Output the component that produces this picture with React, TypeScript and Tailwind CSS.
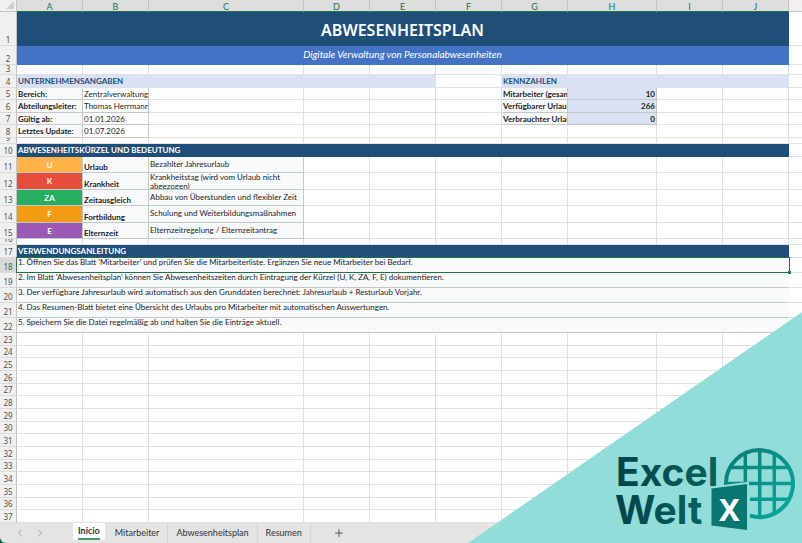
import { ChevronLeft, ChevronRight, Plus } from "lucide-react";

type Cell = {
    text?: string;
    span?: number;
    className?: string;
    selected?: boolean;
};

type Row = {
    height: string;
    cells?: Cell[];
};

const COLUMNS = ["A", "B", "C", "D", "E", "F", "G", "H", "I", "J"];

const GRID = "border-[#dfe2e1]";
const BOX = "border-[#c3c8c8]";
const BANNER = "bg-[#1f4e78] border-[#1f4e78] text-white text-[8px] leading-[12px] font-bold";
const SECTION = "bg-[#d9e1f2] border-[#d9e1f2] text-[#1f4e78] text-[8px] leading-[12px] font-bold";
const LABEL = `bg-[#f8f9fb] ${BOX} text-[8px] leading-[12px] font-bold`;
const VALUE = `${BOX} text-[8px] leading-[12px]`;
const KPI = `bg-[#d9e1f2] ${BOX} text-[8px] leading-[12px] font-bold text-right`;
const CODE = `${BOX} text-[8px] leading-[16px] font-bold text-white text-center`;
const MEANING = `bg-[#f8f9fb] ${BOX} text-[8px] leading-[10px] font-bold flex items-end`;
const DESCRIPTION = `bg-[#f8f9fb] ${BOX} text-[8px]`;
const STEP = "bg-[#f8f9fb] border-r-[#f8f9fb] border-b-[#c3c8c8] text-[8px] leading-[9px]";

const info = (label: string, value: string, kpi?: string, amount?: string): Row => ({
    height: "h-[13px]",
    cells: [
        { text: label, className: LABEL },
        { text: value, className: VALUE },
        {}, {}, {}, {},
        kpi ? { text: kpi, className: LABEL } : {},
        kpi ? { text: amount, className: KPI } : {},
    ],
});

const code = (short: string, color: string, meaning: string, description: string, leading = "leading-[15px]"): Row => ({
    height: "h-[16px]",
    cells: [
        { text: short, className: `${CODE} ${color}` },
        { text: meaning, className: MEANING },
        { text: description, className: `${DESCRIPTION} ${leading}` },
    ],
});

const step = (text: string, selected = false): Row => ({
    height: "h-[15px]",
    cells: [{ text, span: 10, className: STEP, selected }],
});

const ROWS: Row[] = [
    {
        height: "h-[34px]",
        cells: [{ text: "ABWESENHEITSPLAN", span: 10, className: "bg-[#1f4e78] border-[#1f4e78] text-white font-['Noto_Sans',sans-serif] text-[16px] leading-[36px] font-semibold text-center" }],
    },
    {
        height: "h-[19px]",
        cells: [{ text: "Digitale Verwaltung von Personalabwesenheiten", span: 10, className: "bg-[#4472c4] border-[#4472c4] text-white text-[10px] leading-[17px] italic text-center" }],
    },
    { height: "h-[10px]" },
    {
        height: "h-[13px]",
        cells: [
            { text: "UNTERNEHMENSANGABEN", span: 5, className: SECTION },
            {},
            { text: "KENNZAHLEN", span: 4, className: SECTION },
        ],
    },
    { ...info("Bereich:", "Zentralverwaltung", "Mitarbeiter (gesamt):", "10"), height: "h-[12px]" },
    info("Abteilungsleiter:", "Thomas Herrmann", "Verfügbarer Urlaub:", "266"),
    { ...info("Gültig ab:", "01.01.2026", "Verbrauchter Urlaub:", "0"), height: "h-[12px]" },
    info("Letztes Update:", "01.07.2026"),
    { height: "h-[6px]" },
    { height: "h-[13px]", cells: [{ text: "ABWESENHEITSKÜRZEL UND BEDEUTUNG", span: 10, className: BANNER }] },
    code("U", "bg-[#ffb347]", "Urlaub", "Bezahlter Jahresurlaub"),
    { ...code("K", "bg-[#e74c3c]", "Krankheit", "Krankheitstag (wird vom Urlaub nicht\nabgezogen)", "leading-[9px]"), height: "h-[17px]" },
    code("ZA", "bg-[#27ae60]", "Zeitausgleich", "Abbau von Überstunden und flexibler Zeit"),
    { ...code("F", "bg-[#f39c12]", "Fortbildung", "Schulung und Weiterbildungsmaßnahmen"), height: "h-[17px]" },
    code("E", "bg-[#9b59b6]", "Elternzeit", "Elternzeitregelung / Elternzeitantrag"),
    { height: "h-[6px]" },
    { height: "h-[13px]", cells: [{ text: "VERWENDUNGSANLEITUNG", span: 10, className: BANNER }] },
    step("1. Öffnen Sie das Blatt 'Mitarbeiter' und prüfen Sie die Mitarbeiterliste. Ergänzen Sie neue Mitarbeiter bei Bedarf.", true),
    step("2. Im Blatt 'Abwesenheitsplan' können Sie Abwesenheitszeiten durch Eintragung der Kürzel (U, K, ZA, F, E) dokumentieren."),
    step("3. Der verfügbare Jahresurlaub wird automatisch aus den Grunddaten berechnet: Jahresurlaub + Resturlaub Vorjahr."),
    step("4. Das Resumen-Blatt bietet eine Übersicht des Urlaubs pro Mitarbeiter mit automatischen Auswertungen."),
    step("5. Speichern Sie die Datei regelmäßig ab und halten Sie die Einträge aktuell."),
    ...Array.from({ length: 15 }, (_, i): Row => ({ height: i % 3 === 1 ? "h-[12px]" : "h-[13px]" })),
];

const TABS = ["Inicio", "Mitarbeiter", "Abwesenheitsplan", "Resumen"];

// fills the cells that a row leaves out, up to column J
function fillCells(cells: Cell[] = []): Cell[] {
    const used = cells.reduce((sum, cell) => sum + (cell.span ?? 1), 0);
    return [...cells, ...Array.from({ length: COLUMNS.length - used }, () => ({}))];
}

function SheetRow({ row, number }: { row: Row; number: number }) {
    const cells = fillCells(row.cells);
    const active = cells.some((cell) => cell.selected);
    return (
        <tr>
            <th className="p-0 font-normal">
                <div className={`flex items-end justify-center overflow-hidden border-r border-b border-r-[#c4c4c4] border-b-[#dcdcdc] font-['Noto_Sans',sans-serif] text-[8px] leading-[10px] ${row.height} ${active ? "bg-[#d8d8d8] text-[#217346]" : "bg-[#f0f0f0] text-[#505050]"}`}>
                    {number}
                </div>
            </th>
            {cells.map((cell, i) => (
                <td key={i} colSpan={cell.span ?? 1} className={`p-0 ${cell.selected ? "relative z-10" : ""}`}>
                    <div className={`overflow-hidden border-r border-b px-px whitespace-pre ${row.height} ${cell.className ?? GRID}`}>
                        {cell.text}
                    </div>
                    {cell.selected && (
                        <div className="absolute -inset-x-px -top-px bottom-0 border border-[#217346]">
                            <span className="absolute -right-0.5 -bottom-0.5 size-[3px] bg-[#217346]" />
                        </div>
                    )}
                </td>
            ))}
            <td className="p-0">
                <div className={`border-b ${row.height} ${GRID}`} />
            </td>
        </tr>
    );
}

function Logo() {
    return (
        <svg viewBox="0 0 334 231" className="pointer-events-none absolute right-0 bottom-0 h-[231px] w-[334px]" role="img" aria-label="Excel Welt">
            <defs>
                <linearGradient id="word" x1="0" y1="0" x2="1" y2="0">
                    <stop offset="0" stopColor="#02434a" />
                    <stop offset="1" stopColor="#07625f" />
                </linearGradient>
                <linearGradient id="globe" gradientUnits="userSpaceOnUse" x1="262" y1="145" x2="320" y2="200">
                    <stop offset="0" stopColor="#0b7f79" />
                    <stop offset="1" stopColor="#0aa69c" />
                </linearGradient>
            </defs>
            <path d="M334 0V231H0Z" fill="#92dcd9" />
            <g stroke="url(#globe)" fill="none">
                <path d="M258 173A33.500 33.500 0 1 1 282 203.700" strokeWidth="4" />
                <path d="M262 155.500H321M258 171.500H325M282 187.300H321M277.300 142V172M291.700 138V205M306.300 142V201" strokeWidth="3.500" />
            </g>
            <path d="M243.500 176.500L279 172V218L243.500 213.500Z" fill="#087771" stroke="#92dcd9" strokeWidth="4" paintOrder="stroke" />
            <text x="148" y="174" fontFamily="Inter, sans-serif" fontSize="39" fontWeight="700" fill="url(#word)">Excel</text>
            <text x="147" y="212" fontFamily="Inter, sans-serif" fontSize="39" fontWeight="700" fill="url(#word)">Welt</text>
            <text x="251" y="209" fontFamily="Noto Sans, sans-serif" fontSize="31" fontWeight="700" fill="#fff">X</text>
        </svg>
    );
}

export default function App() {
    return (
        <div className="relative flex min-h-screen flex-col overflow-hidden bg-[#0f5c45] font-['Lato',sans-serif] text-[#1c1c1c]">
            <table className="w-full table-fixed border-separate border-spacing-0 bg-white">
                <colgroup>
                    <col className="w-[17px]" />
                    <col className="w-[66px]" />
                    <col className="w-[66px]" />
                    <col className="w-[155px]" />
                    <col className="w-[66px]" />
                    <col className="w-[66px]" />
                    <col className="w-[66px]" />
                    <col className="w-[66px]" />
                    <col className="w-[89px]" />
                    <col className="w-[66px]" />
                    <col className="w-[66px]" />
                    <col />
                </colgroup>
                <thead>
                    <tr>
                        <th className="p-0">
                            <div className="flex h-[12px] items-end justify-end border-r border-b border-[#c4c4c4] bg-[#f0f0f0] p-0.5">
                                <svg viewBox="0 0 8 8" className="size-2"><path d="M8 0V8H0Z" fill="#cfcfcf" /></svg>
                            </div>
                        </th>
                        {COLUMNS.map((name) => (
                            <th key={name} className="p-0 font-normal">
                                <div className="h-[12px] border-r border-b border-r-[#c4c4c4] border-b-[#217346] bg-[#dedede] text-center text-[9px] leading-[13px] text-[#217346]">{name}</div>
                            </th>
                        ))}
                        <th className="p-0">
                            <div className="h-[12px] border-b border-[#c4c4c4] bg-[#f0f0f0]" />
                        </th>
                    </tr>
                </thead>
                <tbody>
                    {ROWS.map((row, i) => (
                        <SheetRow key={i} row={row} number={i + 1} />
                    ))}
                </tbody>
            </table>

            <nav className="flex flex-1 items-start rounded-bl-md bg-[#e4e4e4] text-[9px] leading-[20px] text-[#333]">
                <button type="button" aria-label="Vorheriges Blatt" className="mt-1 ml-3.5 text-[#888]">
                    <ChevronLeft size={12} strokeWidth={1.5} />
                </button>
                <button type="button" aria-label="Nächstes Blatt" className="mt-1 ml-2 text-[#888]">
                    <ChevronRight size={12} strokeWidth={1.5} />
                </button>
                <div className="ml-[27px] flex">
                    {TABS.map((tab, i) => (
                        <button
                            key={tab}
                            type="button"
                            className={i === 0 ? "mr-0.5 h-[17px] rounded-b-xs bg-white px-[5px] font-bold" : "border-r border-[#d4d4d4] px-2"}
                        >
                            {i === 0 ? <span className="block h-4 border-b-2 border-[#3f9a6b] leading-[14px]">{tab}</span> : tab}
                        </button>
                    ))}
                </div>
                <button type="button" aria-label="Neues Blatt" className="mt-1 ml-[22px]">
                    <Plus size={12} strokeWidth={1.5} />
                </button>
            </nav>

            <Logo />
        </div>
    );
}
